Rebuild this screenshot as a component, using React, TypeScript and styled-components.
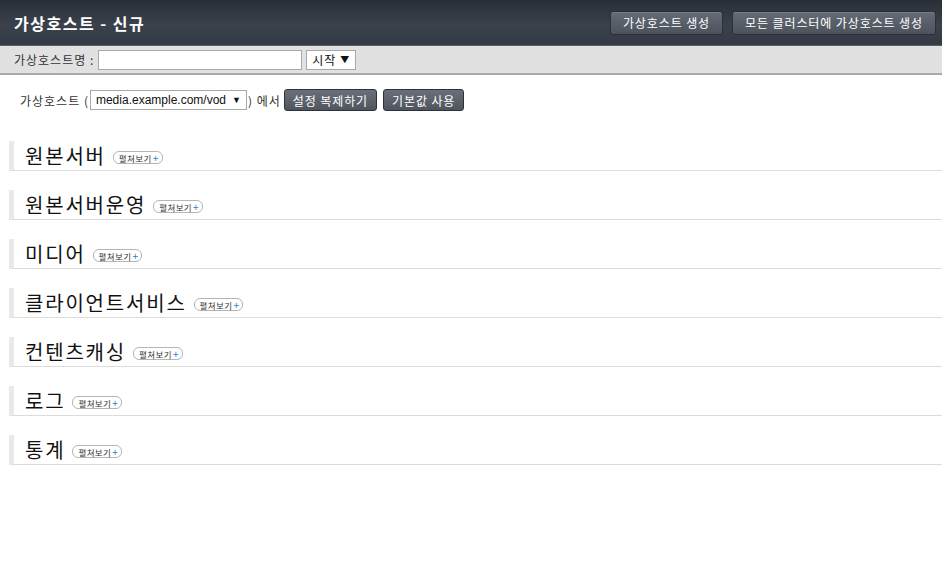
import React from "react";
import styled, { createGlobalStyle } from "styled-components";

const Global = createGlobalStyle`
  html, body { margin: 0; padding: 0; background: #fff; }
  body {
    font-family: "Noto Sans CJK KR", "Liberation Sans", sans-serif;
    font-size: 12px;
    color: #333;
  }
`;

const Header = styled.header`
  height: 46px;
  box-sizing: border-box;
  display: flex;
  align-items: center;
  justify-content: space-between;
  padding: 0 6px 0 14px;
  background: linear-gradient(#2a2f36, #3a414a 55%, #343a43);
  border-bottom: 1px solid #5a5f66;
`;

const Title = styled.h1`
  margin: 0;
  font-size: 16px;
  font-weight: bold;
  color: #fff;
  letter-spacing: 1.5px;
`;

const HeaderActions = styled.div`
  display: flex;
  gap: 9px;
`;

const HeaderButton = styled.button`
  height: 24px;
  padding: 0 12px;
  font-family: inherit;
  font-size: 12px;
  letter-spacing: 0.9px;
  color: #fff;
  background: linear-gradient(#646b75, #4d535c);
  border: 1px solid #2b3036;
  border-radius: 3px;
  box-shadow: inset 0 1px 0 rgba(255, 255, 255, 0.12);
  cursor: pointer;
`;

const SubBar = styled.div`
  height: 29px;
  box-sizing: border-box;
  display: flex;
  align-items: center;
  gap: 4px;
  padding: 0 0 0 14px;
  background: #e1e1e1;
  border-bottom: 2px solid #a9a9a9;
`;

const Label = styled.span`
  font-size: 12px;
  letter-spacing: 1px;
  color: #333;
`;

const TextInput = styled.input`
  width: 204px;
  height: 20px;
  box-sizing: border-box;
  border: 1px solid #a8a8a8;
  background: #fff;
  padding: 0 3px;
  margin: 0;
`;

const SelectBox = styled.div<{ $w: number; $latin?: boolean }>`
  width: ${(p) => p.$w}px;
  height: 20px;
  box-sizing: border-box;
  display: flex;
  align-items: center;
  justify-content: space-between;
  padding: 0 5px 0 5px;
  border: 1px solid #a8a8a8;
  background: #fff;
  font-family: ${(p) =>
    p.$latin
      ? `"Liberation Sans", "Noto Sans CJK KR", sans-serif`
      : `"Noto Sans CJK KR", sans-serif`};
  font-size: 12px;
  letter-spacing: ${(p) => (p.$latin ? "0" : "1px")};
  color: #111;
`;

const Arrow = styled.span`
  font-size: 9px;
  color: #111;
`;

const CopyRow = styled.div`
  display: flex;
  align-items: center;
  gap: 1px;
  padding: 14px 0 0 20px;
  height: 22px;
`;

const Gap = styled.span<{ $w: number }>`
  display: inline-block;
  width: ${(p) => p.$w}px;
`;

const DarkButton = styled.button`
  height: 22px;
  padding: 0 8px;
  font-family: inherit;
  font-size: 12px;
  letter-spacing: 0.9px;
  color: #fff;
  background: linear-gradient(#6a7079, #4f555e);
  border: 1px solid #2e3238;
  border-radius: 3px;
  cursor: pointer;
`;

const Sections = styled.div`
  display: flex;
  flex-direction: column;
  gap: 19px;
  padding: 30px 0 0 9px;
`;

const Section = styled.section`
  height: 30px;
  box-sizing: border-box;
  display: flex;
  align-items: center;
  gap: 7px;
  padding-left: 11px;
  border-left: 5px solid #e9e9e9;
  border-bottom: 1px solid #dcdcdc;
`;

const SectionTitle = styled.h2`
  margin: 0;
  font-size: 20px;
  font-weight: normal;
  letter-spacing: 1.8px;
  color: #111;
  line-height: 26px;
`;

const Expand = styled.span`
  display: inline-flex;
  align-items: center;
  height: 11px;
  padding: 0 3px 0 5px;
  border: 1px solid #b5b5b5;
  border-radius: 6px;
  font-size: 8.5px;
  letter-spacing: 0.4px;
  line-height: 10px;
  color: #333;
  margin-top: 4px;
`;

const Plus = styled.span`
  color: #2f7bc4;
  font-size: 10px;
  margin-left: 1px;
`;

const sections = [
  "원본서버",
  "원본서버운영",
  "미디어",
  "클라이언트서비스",
  "컨텐츠캐싱",
  "로그",
  "통계",
];

export default function App() {
  return (
    <>
      <Global />
      <Header>
        <Title>가상호스트 - 신규</Title>
        <HeaderActions>
          <HeaderButton>가상호스트 생성</HeaderButton>
          <HeaderButton>모든 클러스터에 가상호스트 생성</HeaderButton>
        </HeaderActions>
      </Header>
      <SubBar>
        <Label>가상호스트명 :</Label>
        <TextInput />
        <SelectBox $w={50}>
          <span>시작</span>
          <Arrow>▼</Arrow>
        </SelectBox>
      </SubBar>
      <CopyRow>
        <Label>가상호스트 (</Label>
        <SelectBox $w={157} $latin>
          <span>media.example.com/vod</span>
          <Arrow>▼</Arrow>
        </SelectBox>
        <Label>) 에서</Label>
        <Gap $w={1} />
        <DarkButton>설정 복제하기</DarkButton>
        <Gap $w={4} />
        <DarkButton>기본값 사용</DarkButton>
      </CopyRow>
      <Sections>
        {sections.map((s) => (
          <Section key={s}>
            <SectionTitle>{s}</SectionTitle>
            <Expand>
              펼쳐보기<Plus>+</Plus>
            </Expand>
          </Section>
        ))}
      </Sections>
    </>
  );
}
